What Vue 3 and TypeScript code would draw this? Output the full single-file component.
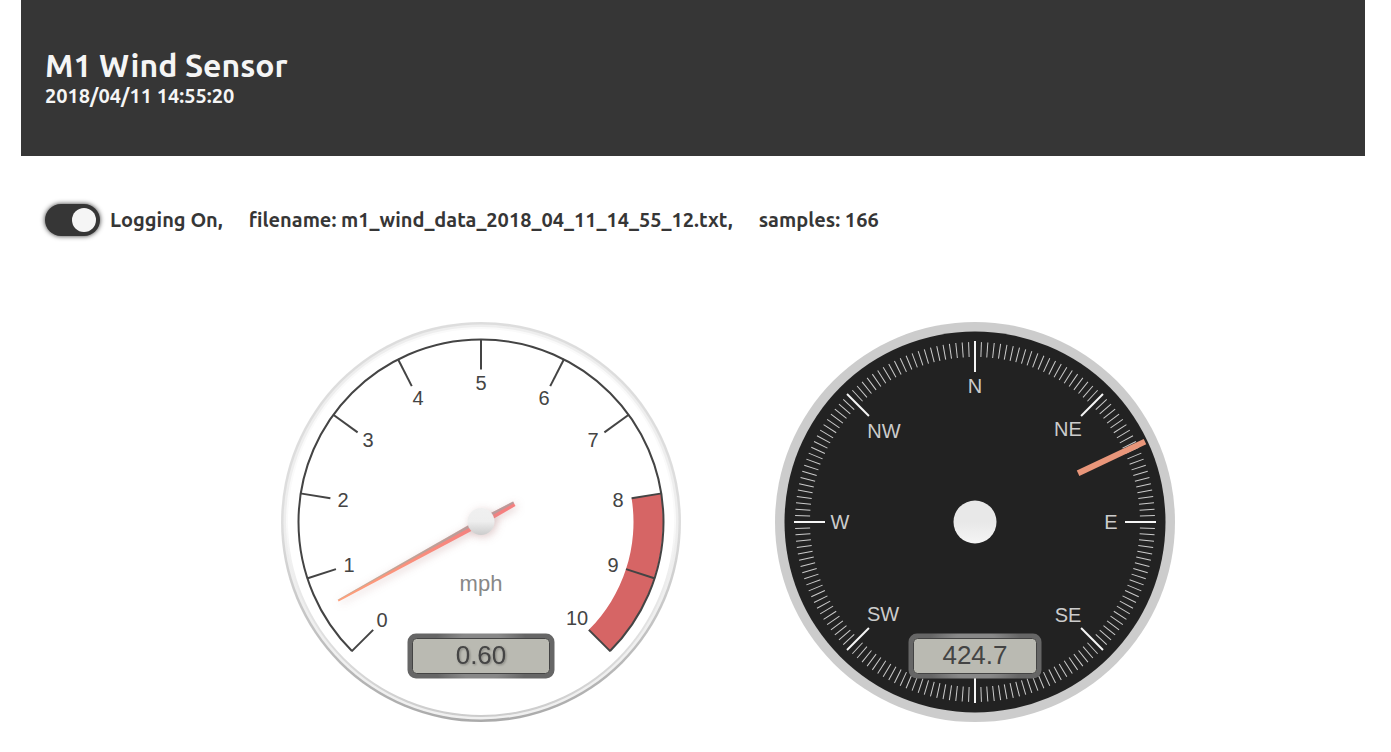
<script setup lang="ts">
import { ref } from 'vue'

interface Label {
  text: string
  x: number
  y: number
}

interface Tick {
  angle: number
  major: boolean
}

const logging = ref(true)

const speedAngles: number[] = Array.from({ length: 11 }, (_, i) => 225 + i * 27)

const speedLabels: Label[] = [
  { text: '0', x: 101, y: 305 },
  { text: '1', x: 68, y: 250 },
  { text: '2', x: 62, y: 185 },
  { text: '3', x: 87, y: 125 },
  { text: '4', x: 137, y: 83 },
  { text: '5', x: 200, y: 68 },
  { text: '6', x: 263, y: 83 },
  { text: '7', x: 312, y: 125 },
  { text: '8', x: 337, y: 185 },
  { text: '9', x: 332, y: 250 },
  { text: '10', x: 296, y: 303 },
]

const compassLabels: Label[] = [
  { text: 'N', x: 200, y: 71 },
  { text: 'NE', x: 293, y: 114 },
  { text: 'E', x: 336, y: 207 },
  { text: 'SE', x: 293, y: 300 },
  { text: 'SW', x: 108, y: 299 },
  { text: 'W', x: 65, y: 207 },
  { text: 'NW', x: 109, y: 116 },
]

const compassTicks: Tick[] = Array.from({ length: 176 }, (_, i) => ({
  angle: (i * 360) / 176,
  major: i % 22 === 0,
}))

function polar(r: number, deg: number): string {
  const a = (deg * Math.PI) / 180
  return `${(200 + r * Math.sin(a)).toFixed(2)} ${(200 - r * Math.cos(a)).toFixed(2)}`
}

const scaleArc = `M${polar(182.5, 225)} A182.5 182.5 0 1 1 ${polar(182.5, 135)}`
const highlight = `M${polar(152.5, 81)} L${polar(182, 81)} A182 182 0 0 1 ${polar(182, 135)} L${polar(152.5, 135)} A152.5 152.5 0 0 0 ${polar(152.5, 81)} Z`
</script>

<template>
  <div class="page">
    <header class="banner">
      <h1 class="title">M1 Wind Sensor</h1>
      <p class="time">2018/04/11 14:55:20</p>
    </header>

    <main>
      <div class="logging">
        <label class="toggle">
          <input v-model="logging" class="switch" type="checkbox" role="switch" />
          <span>Logging {{ logging ? 'On' : 'Off' }},</span>
        </label>
        <span>filename: m1_wind_data_2018_04_11_14_55_12.txt,</span>
        <span>samples: 166</span>
      </div>

      <div class="gauges">
        <svg class="gauge" viewBox="0 0 400 400" role="img" aria-label="Wind speed">
          <defs>
            <linearGradient id="ring-outer" x1="0" y1="0" x2="0" y2="1">
              <stop offset="0.5" stop-color="#ddd" />
              <stop offset="1" stop-color="#aaa" />
            </linearGradient>
            <linearGradient id="ring-middle" x1="0" y1="0" x2="0" y2="1">
              <stop offset="0.5" stop-color="#eee" />
              <stop offset="1" stop-color="#f0f0f0" />
            </linearGradient>
            <linearGradient id="ring-inner" x1="0" y1="0" x2="0" y2="1">
              <stop offset="0.5" stop-color="#fafafa" />
              <stop offset="1" stop-color="#ccc" />
            </linearGradient>
            <linearGradient id="hub" x1="0" y1="0" x2="0" y2="1">
              <stop offset="0" stop-color="#f0f0f0" />
              <stop offset="0.5" stop-color="#eee" />
              <stop offset="1" stop-color="#ccc" />
            </linearGradient>
            <linearGradient id="needle" gradientUnits="userSpaceOnUse" x1="0" y1="-163" x2="0" y2="0">
              <stop offset="0" stop-color="#ffa07a" />
              <stop offset="1" stop-color="#f57f7f" />
            </linearGradient>
            <radialGradient id="box-rim" gradientUnits="userSpaceOnUse" cx="200" cy="333" r="74">
              <stop offset="0.35" stop-color="#888" />
              <stop offset="0.65" stop-color="#666" />
            </radialGradient>
            <filter id="soft" x="-50%" y="-50%" width="200%" height="200%">
              <feDropShadow dx="2" dy="2" stdDeviation="4" flood-color="#bc8f8f" flood-opacity="0.45" />
            </filter>
            <filter id="text-shadow" x="-20%" y="-20%" width="150%" height="160%">
              <feDropShadow dx="1" dy="1" stdDeviation="1" flood-color="#000" flood-opacity="0.3" />
            </filter>
          </defs>
          <circle cx="200" cy="200" r="200" fill="url(#ring-outer)" />
          <circle cx="200" cy="200" r="197.5" fill="url(#ring-middle)" />
          <circle cx="200" cy="200" r="195" fill="url(#ring-inner)" />
          <circle cx="200" cy="200" r="193" fill="#fff" />
          <path :d="highlight" fill="#d66565" />
          <path :d="scaleArc" class="speed-line" />
          <line
            v-for="angle in speedAngles"
            :key="angle"
            class="speed-line"
            x1="200"
            y1="17"
            x2="200"
            y2="47.5"
            :transform="`rotate(${angle} 200 200)`"
          />
          <text v-for="l in speedLabels" :key="l.text" class="num" :x="l.x" :y="l.y">{{ l.text }}</text>
          <text class="unit" x="200" y="269">mph</text>
          <rect x="129" y="314" width="142" height="40" rx="6" fill="#babab2" stroke="url(#box-rim)" stroke-width="5" />
          <rect x="131.5" y="316.5" width="137" height="35" rx="4" fill="none" stroke="#444" stroke-width="1" />
          <text class="value" x="200" y="342" filter="url(#text-shadow)">0.60</text>
          <g filter="url(#soft)">
            <g transform="translate(200 200) rotate(241.2)">
              <path d="M-1 -163 L-3.5 0 L-2.5 38 L2.5 38 L3.5 0 L1 -163 Z" fill="url(#needle)" />
              <path d="M1 -163 L3.5 0 L2.5 38 L0.5 38 L0.5 -163 Z" fill="#5fc4c4" fill-opacity="0.4" />
            </g>
          </g>
          <circle cx="200" cy="199.5" r="13.5" fill="url(#hub)" filter="url(#soft)" />
        </svg>

        <svg class="gauge" viewBox="0 0 400 400" role="img" aria-label="Wind direction">
          <defs>
            <linearGradient id="compass-hub" x1="0" y1="0" x2="0" y2="1">
              <stop offset="0.5" stop-color="#e8e8e8" />
              <stop offset="1" stop-color="#f5f5f5" />
            </linearGradient>
          </defs>
          <circle cx="200" cy="200" r="200" fill="#ccc" />
          <circle cx="200" cy="200" r="190.5" fill="#222" />
          <line
            v-for="t in compassTicks"
            :key="t.angle"
            :class="t.major ? 'major' : 'minor'"
            x1="200"
            :y1="t.major ? 19 : 20"
            x2="200"
            :y2="t.major ? 50 : 35"
            :transform="`rotate(${t.angle} 200 200)`"
          />
          <text v-for="l in compassLabels" :key="l.text" class="point" :x="l.x" :y="l.y">{{ l.text }}</text>
          <rect x="136" y="314" width="128" height="40" rx="6" fill="#babab2" stroke="url(#box-rim)" stroke-width="5" />
          <rect x="138.5" y="316.5" width="123" height="35" rx="4" fill="none" stroke="#444" stroke-width="1" />
          <text class="value" x="200" y="342">424.7</text>
          <rect x="-3" y="-188" width="6" height="74" fill="#e9967a" transform="translate(200 200) rotate(64.7)" />
          <circle cx="200" cy="200" r="21.5" fill="url(#compass-hub)" />
        </svg>
      </div>
    </main>
  </div>
</template>

<style>
body {
  background: #fff;
}
</style>

<style scoped>
.page {
  margin: 0 26px 0 21px;
  color: #363636;
  font-family: Ubuntu, "Noto Sans", "Open Sans", sans-serif;
}

.banner {
  box-sizing: border-box;
  padding: 48px 24px 46px;
  background: #363636;
  color: #f5f5f5;
}

.title {
  margin: 0;
  font-size: 32px;
  line-height: 34px;
  font-weight: 700;
}

.time {
  margin: 0;
  font-size: 20px;
  line-height: 28px;
  font-weight: 700;
}

.logging {
  display: flex;
  align-items: center;
  gap: 26px;
  padding: 48px 24px 0;
  font-size: 20px;
  line-height: 32px;
  font-weight: 700;
  white-space: nowrap;
}

.toggle {
  display: flex;
  align-items: center;
  gap: 10px;
}

.switch {
  appearance: none;
  display: flex;
  align-items: center;
  box-sizing: border-box;
  width: 55px;
  height: 32px;
  margin: 0;
  padding: 0 4px;
  border-radius: 16px;
  background: #999;
  box-shadow: 0 0 5px #363636;
}

.switch::before {
  content: "";
  width: 24px;
  height: 24px;
  border-radius: 50%;
  background: #f5f5f5;
}

.switch:checked {
  justify-content: flex-end;
  background: #363636;
}

.gauges {
  display: flex;
  justify-content: center;
  gap: 94px;
  padding: 86px 0 24px 70px;
}

.gauge {
  display: block;
  width: 400px;
  height: 400px;
  font-family: "Liberation Sans", Arial, sans-serif;
  text-anchor: middle;
}

.speed-line {
  fill: none;
  stroke: #444;
  stroke-width: 2;
}

.num {
  fill: #444;
  font-size: 20px;
}

.unit {
  fill: #888;
  font-size: 22px;
}

.value {
  fill: #444;
  font-size: 26px;
}

.point {
  fill: #ccc;
  font-size: 20px;
}

.major {
  stroke: #f5f5f5;
  stroke-width: 2;
}

.minor {
  stroke: #ccc;
  stroke-width: 1;
}
</style>
